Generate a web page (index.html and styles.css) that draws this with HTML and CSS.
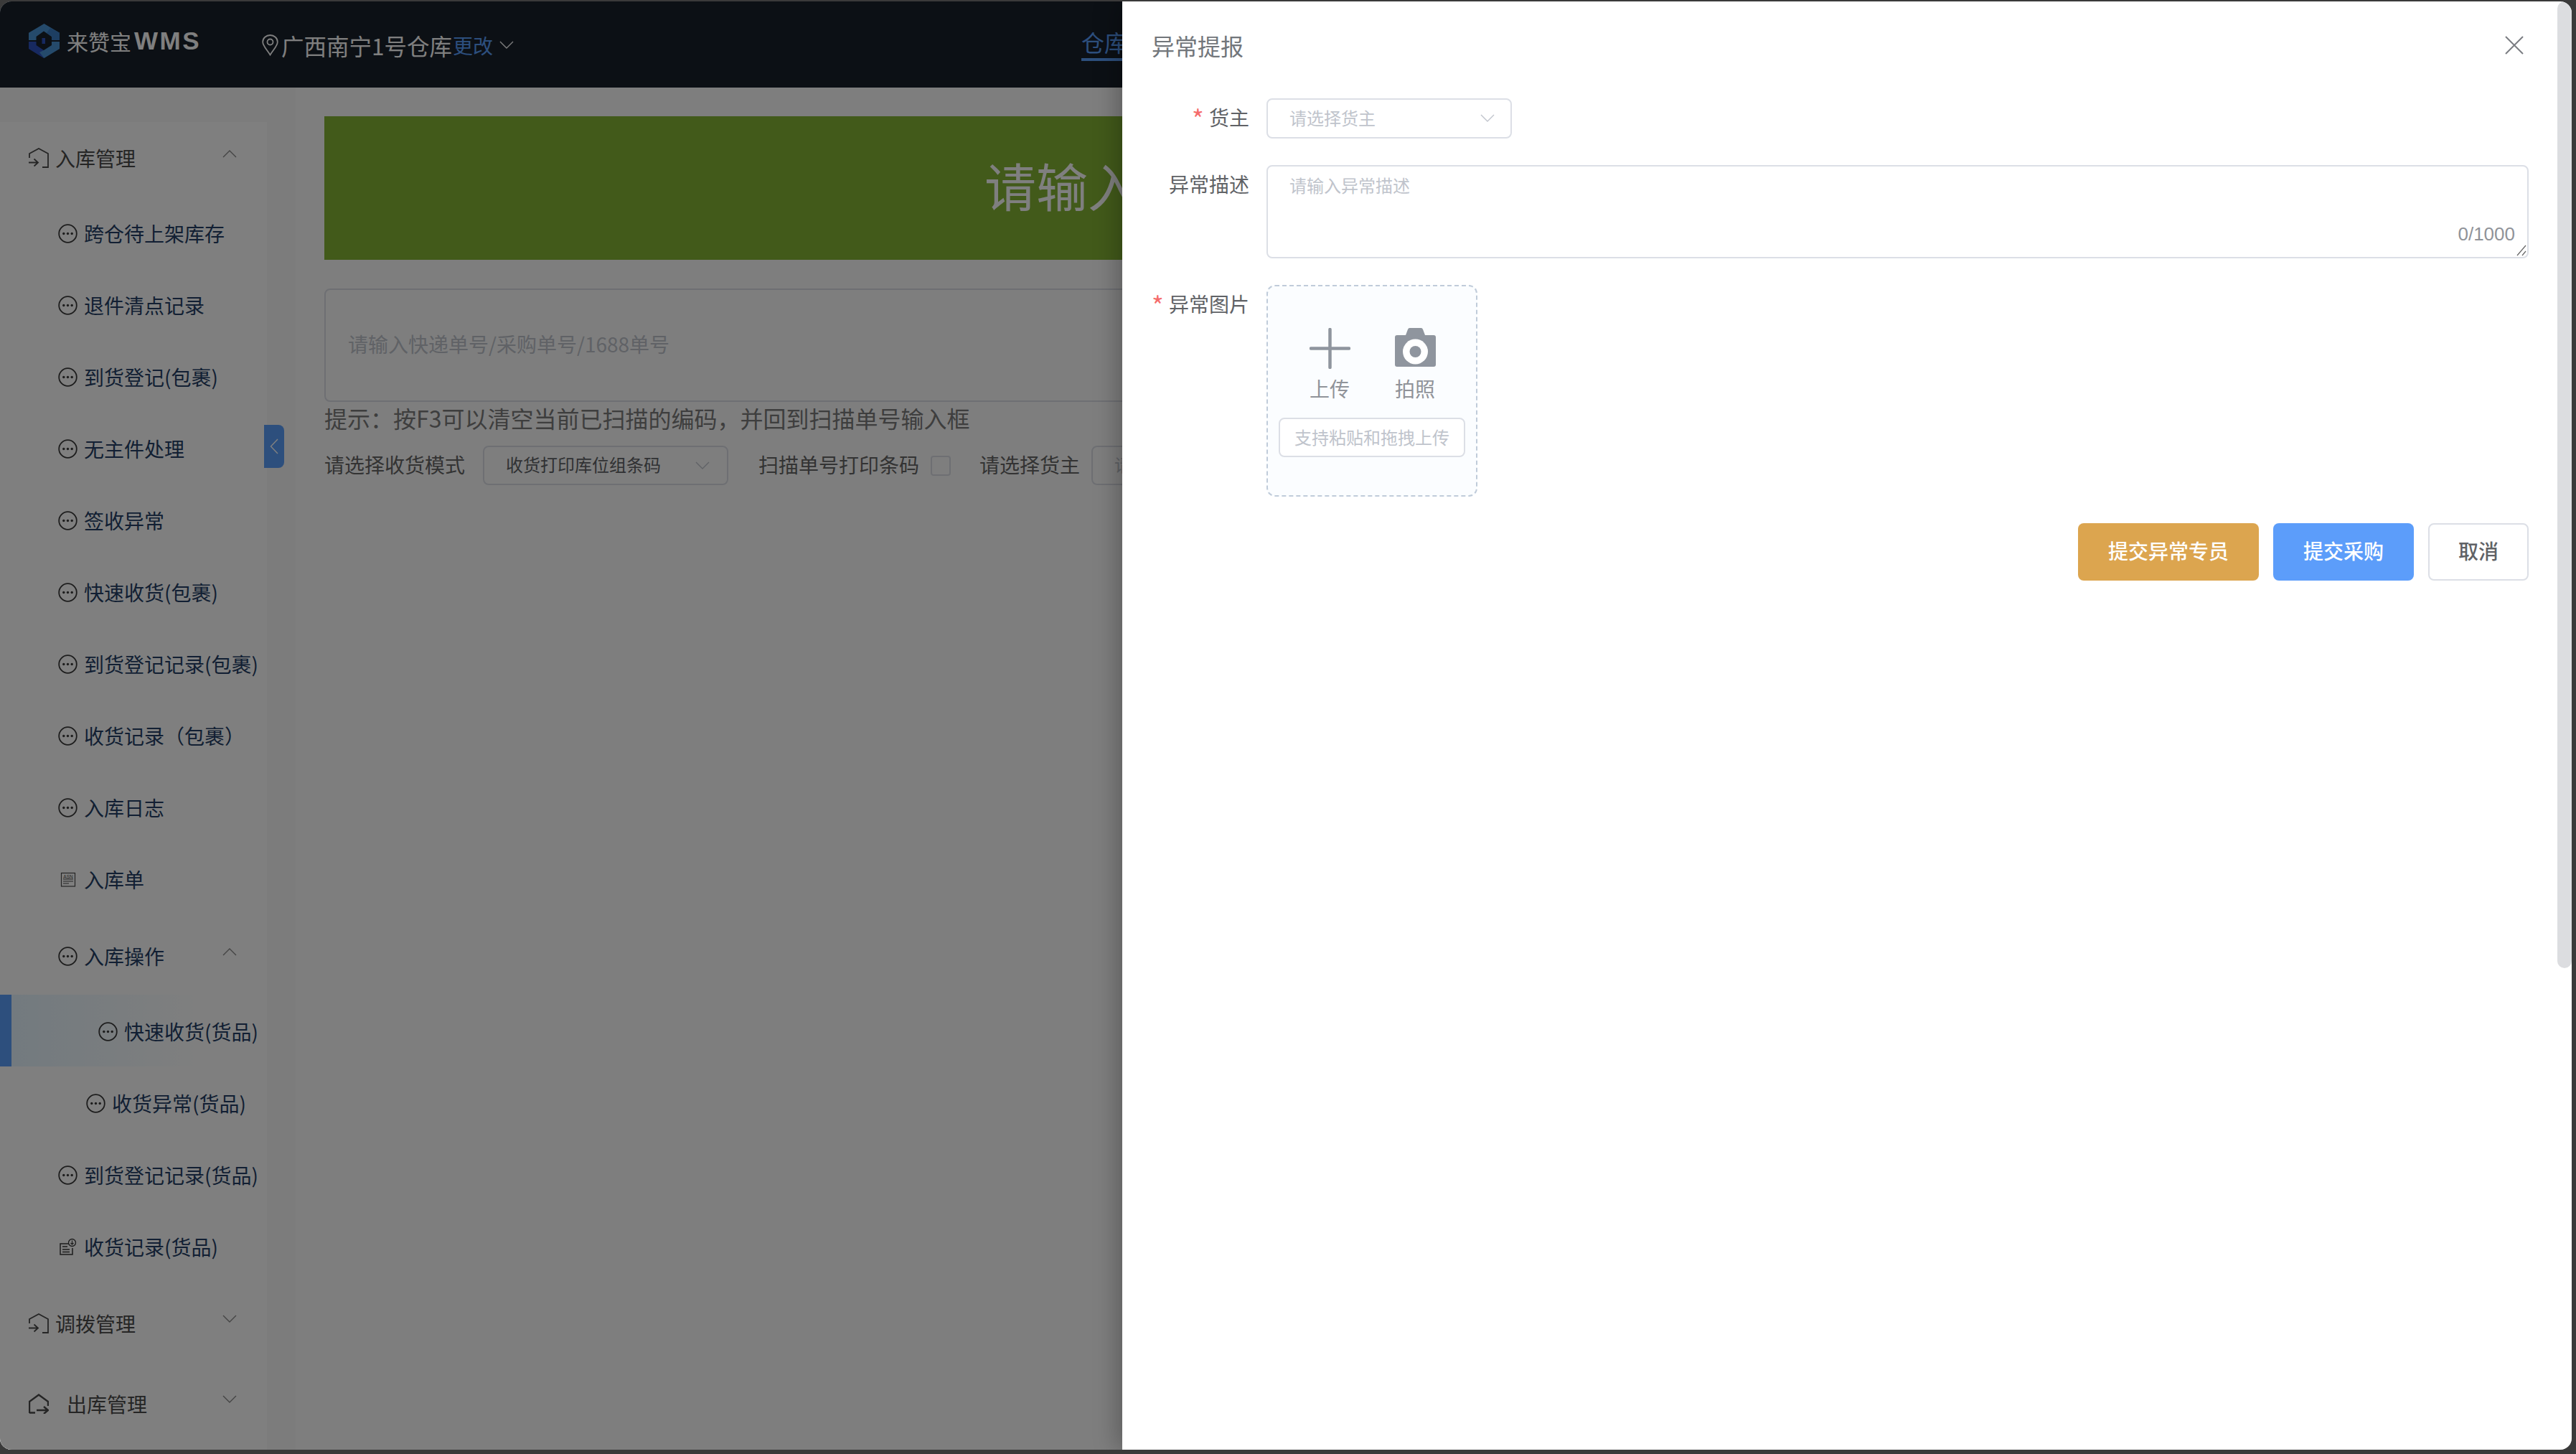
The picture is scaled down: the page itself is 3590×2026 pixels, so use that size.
FILE: index.html
```html
<!DOCTYPE html>
<html lang="zh-CN">
<head>
    <meta charset="utf-8">
    <title>来赞宝WMS</title>
    <link rel="stylesheet" href="styles.css">
</head>

<body>
    <svg class="defs" width="0" height="0">
        <symbol id="i-dots" viewBox="0 0 27 27">
            <circle cx="13.5" cy="13.5" r="12.3" fill="none" stroke="currentColor" stroke-width="1.8"/>
            <circle cx="7.8" cy="13.5" r="1.7" fill="currentColor"/>
            <circle cx="13.5" cy="13.5" r="1.7" fill="currentColor"/>
            <circle cx="19.2" cy="13.5" r="1.7" fill="currentColor"/>
        </symbol>
        <symbol id="i-in" viewBox="0 0 28 28">
            <path d="M1 14V8L14 1l13 7v19h-8M0 20.500h13M7.500 15.500l5.500 5-5.500 5" fill="none" stroke="currentColor" stroke-width="1.800"/>
        </symbol>
        <symbol id="i-out" viewBox="0 0 28 28">
            <path d="M1 27V11L14 1.500 27 11v6M1 26.500h8M11 23h16M21 18l6 5-6 5" fill="none" stroke="currentColor" stroke-width="2.400"/>
        </symbol>
        <symbol id="i-down" viewBox="0 0 20 12">
            <path d="M1 1l9 9 9-9" fill="none" stroke="currentColor" stroke-width="1.4"/>
        </symbol>
        <symbol id="i-up" viewBox="0 0 20 12">
            <path d="M1 11l9-9 9 9" fill="none" stroke="currentColor" stroke-width="1.4"/>
        </symbol>
    </svg>

    <div class="window">
        <header class="topbar">
            <div class="logo">
                <svg width="44" height="48" viewBox="0 0 44 48">
                    <path d="M21.500 0L43 12.700V23H32v-5L21 10.500 10.500 18v5H0V12.700z" fill="#4a94d6"/>
                    <path d="M30 6l13 6.700V23H32v-5l-7-5z" fill="#3a7cc4"/>
                    <path d="M0 25h10.500v5L21 37l4 3-4 8L0 35z" fill="#2f52c0"/>
                    <path d="M43 25H32v5L21 37l-6 3 6.500 8L43 35z" fill="#4a94d6"/>
                    <path d="M18.500 20h4.500v8h-4.500z" fill="#2f52c0"/>
                </svg>
                <span class="logo-name">来赞宝</span><b class="logo-wms">WMS</b>
            </div>
            <div class="house">
                <svg width="23" height="30" viewBox="0 0 23 30">
                    <path d="M11.5 28.5C6 20 1.2 15.5 1.2 10.5a10.3 9.5 0 0 1 20.6 0c0 5-4.800 9.500-10.300 18z" fill="none" stroke="#fff" stroke-width="1.8"/>
                    <circle cx="11.500" cy="10.500" r="4" fill="none" stroke="#fff" stroke-width="1.800"/>
                </svg>
                <span class="house-name">广西南宁1号仓库</span>
                <a class="house-change">更改</a>
                <svg class="house-arrow" width="22" height="12"><use href="#i-down"/></svg>
            </div>
            <nav class="topnav">
                <a class="topnav-on">仓库</a>
            </nav>
        </header>

        <div class="body">
            <aside class="side">
                <ul class="menu">
                    <li class="item top first"><svg class="ic"><use href="#i-in"/></svg>入库管理<svg class="arrow"><use href="#i-up"/></svg></li>
                    <li class="item sub gap-s"><svg class="dot"><use href="#i-dots"/></svg>跨仓待上架库存</li>
                    <li class="item sub"><svg class="dot"><use href="#i-dots"/></svg>退件清点记录</li>
                    <li class="item sub"><svg class="dot"><use href="#i-dots"/></svg>到货登记(包裹)</li>
                    <li class="item sub"><svg class="dot"><use href="#i-dots"/></svg>无主件处理</li>
                    <li class="item sub"><svg class="dot"><use href="#i-dots"/></svg>签收异常</li>
                    <li class="item sub"><svg class="dot"><use href="#i-dots"/></svg>快速收货(包裹)</li>
                    <li class="item sub"><svg class="dot"><use href="#i-dots"/></svg>到货登记记录(包裹)</li>
                    <li class="item sub"><svg class="dot"><use href="#i-dots"/></svg>收货记录（包裹）</li>
                    <li class="item sub"><svg class="dot"><use href="#i-dots"/></svg>入库日志</li>
                    <li class="item sub">
                        <svg class="dot" viewBox="0 0 27 27">
                            <rect x="4.500" y="4.500" width="19" height="18.500" fill="none" stroke="#4a4a4a" stroke-width="1.200"/>
                            <path d="M7 13h14M7 16h14M7 19h8" stroke="#4a4a4a" stroke-width="1.200"/>
                            <text x="14" y="11.500" class="asn">ASN</text>
                        </svg>入库单
                    </li>
                    <li class="item sub gap"><svg class="dot"><use href="#i-dots"/></svg>入库操作<svg class="arrow"><use href="#i-up"/></svg></li>
                    <li class="item active"><svg class="dot"><use href="#i-dots"/></svg>快速收货(货品)</li>
                    <li class="item third"><svg class="dot"><use href="#i-dots"/></svg>收货异常(货品)</li>
                    <li class="item sub"><svg class="dot"><use href="#i-dots"/></svg>到货登记记录(货品)</li>
                    <li class="item sub">
                        <svg class="dot" viewBox="0 0 27 27">
                            <path d="M20 9H3v15h17v-9M6 13h7M6 17h10M6 20.500h10" fill="none" stroke="currentColor" stroke-width="1.500"/>
                            <circle cx="19.500" cy="7.500" r="5" fill="#fff" stroke="currentColor" stroke-width="1.300"/>
                            <path d="M19.500 4.500v5M17.500 8l2 2 2-2" fill="none" stroke="currentColor" stroke-width="1.100"/>
                        </svg>收货记录(货品)
                    </li>
                    <li class="item top gap"><svg class="ic"><use href="#i-in"/></svg>调拨管理<svg class="arrow"><use href="#i-down"/></svg></li>
                    <li class="item top out"><svg class="ic"><use href="#i-out"/></svg>出库管理<svg class="arrow"><use href="#i-down"/></svg></li>
                </ul>
                <div class="fold">
                    <svg width="12" height="22" viewBox="0 0 12 22"><path d="M11 1L1.500 11l9.500 10" fill="none" stroke="#fff" stroke-width="1.500"/></svg>
                </div>
            </aside>

            <main class="page">
                <div class="banner">请输入</div>
                <div class="scan-input">请输入快递单号/采购单号/1688单号</div>
                <p class="tip">提示：按F3可以清空当前已扫描的编码，并回到扫描单号输入框</p>
                <div class="filters">
                    <span class="filter-label">请选择收货模式</span>
                    <div class="filter-select">收货打印库位组条码<svg width="20" height="12"><use href="#i-down"/></svg></div>
                    <span class="filter-label print">扫描单号打印条码</span>
                    <span class="check"></span>
                    <span class="filter-label owner">请选择货主</span>
                    <div class="filter-select last">请选择货主</div>
                </div>
            </main>
        </div>

        <div class="mask"></div>

        <section class="drawer">
            <div class="drawer-head">
                <h2>异常提报</h2>
                <svg class="close" width="26" height="26" viewBox="0 0 26 26"><path d="M1 1l24 24M25 1L1 25" stroke="#7b7d82" stroke-width="2"/></svg>
            </div>

            <div class="row row-owner">
                <label class="req">货主</label>
                <div class="select">请选择货主<svg width="20" height="12"><use href="#i-down"/></svg></div>
            </div>

            <div class="row row-desc">
                <label>异常描述</label>
                <div class="area">
                    请输入异常描述
                    <span class="count">0/1000</span>
                    <svg class="grip" width="14" height="16" viewBox="0 0 14 16"><path d="M1 15L13 1M8 15l5-6" stroke="#666" stroke-width="1.200"/></svg>
                </div>
            </div>

            <div class="row row-pic">
                <label class="req">异常图片</label>
                <div class="upload">
                    <div class="upload-btns">
                        <div class="upload-btn">
                            <svg width="57" height="57" viewBox="0 0 57 57"><path d="M28.500 2v53M2 28.500h53" stroke="#8f959e" stroke-width="4.500" stroke-linecap="round"/></svg>
                            <span>上传</span>
                        </div>
                        <div class="upload-btn">
                            <svg width="57" height="57" viewBox="0 0 57 57">
                                <path d="M3 11h12l3-8a3 3 0 0 1 3-2h15a3 3 0 0 1 3 2l3 8h12a3 3 0 0 1 3 3v38a3 3 0 0 1-3 3H3a3 3 0 0 1-3-3V14a3 3 0 0 1 3-3z" transform="translate(0 -1)" fill="#8f959e"/>
                                <circle cx="28.500" cy="33" r="17.500" fill="#fff"/>
                                <circle cx="28.500" cy="33" r="8" fill="#8f959e"/>
                            </svg>
                            <span>拍照</span>
                        </div>
                    </div>
                    <div class="paste">支持粘贴和拖拽上传</div>
                </div>
            </div>

            <div class="actions">
                <button class="btn btn-orange">提交异常专员</button>
                <button class="btn btn-blue">提交采购</button>
                <button class="btn btn-plain">取消</button>
            </div>

            <div class="scrollbar"></div>
        </section>
    </div>
</body>
</html>
```

FILE: styles.css
```css
* {
    box-sizing: border-box;
}

html,
body {
    margin: 0;
    height: 100%;
    background-color: #3a3a3a;
    overflow: hidden;
}

body {
    padding-top: 2px;
    font-family: "Noto Sans CJK SC", "Liberation Sans", sans-serif;
    font-size: 28px;
}

.defs {
    position: absolute;
}

.window {
    position: relative;
    width: 3584px;
    height: 2018px;
    border-radius: 16px;
    overflow: hidden;
    background-color: #fdfdfd;
}

/* top bar */
.topbar {
    display: flex;
    align-items: center;
    height: 120px;
    background-color: #18202a;
    color: #fff;
}

.logo {
    display: flex;
    align-items: center;
    width: 365px;
    padding-left: 40px;
    margin-top: -10px;
}

.logo-name {
    margin-left: 9px;
    font-size: 30px;
    line-height: 48px;
}

.logo-wms {
    margin-left: 4px;
    font-family: "Liberation Sans", sans-serif;
    font-size: 35px;
    letter-spacing: 2.500px;
}

.house {
    display: flex;
    align-items: center;
    margin-top: 2px;
    width: 1142px;
}

.house-name {
    margin-left: 4px;
    font-size: 31.500px;
}

.house-change {
    margin-left: 1px;
    color: #5a9efa;
}

.house-arrow {
    margin-left: 8px;
    color: #fff;
}

.topnav a {
    display: block;
    width: 128px;
    margin-top: -2px;
    padding-bottom: 2px;
    font-size: 32px;
    line-height: 42px;
    color: #5a9efa;
    border-bottom: 4px solid #5a9efa;
}

/* left menu */
.body {
    display: flex;
    height: 1898px;
}

.side {
    position: relative;
    flex: none;
    width: 412px;
    padding: 40px 40px 0 0;
    background-color: #f8f8f8;
}

.menu {
    margin: 0;
    padding: 0;
    height: 100%;
    list-style: none;
    background-color: #fff;
}

.item {
    display: flex;
    align-items: center;
    height: 100px;
    color: #243e66;
    white-space: nowrap;
}

.first {
    margin-top: 8px;
}

.gap-s {
    margin-top: 5px;
}

.gap {
    margin-top: 7px;
}

.top {
    padding-left: 40px;
    color: #4a4a4a;
}

.out {
    margin-top: 12px;
}

.sub {
    padding-left: 81px;
}

.third {
    margin-top: 1px;
    padding-left: 120px;
}

.active {
    margin-top: 4px;
    padding: 2px 0 0 121px;
    background: linear-gradient(90deg, #e6f5ff, #fff 75%);
    border-left: 16px solid #5a9efa;
}

.ic {
    width: 28px;
    height: 28px;
    margin-right: 9px;
    color: #4a4a4a;
}

.out .ic {
    margin-right: 25px;
}

.dot {
    flex: none;
    width: 27px;
    height: 27px;
    margin-right: 9px;
    color: #3a3a3a;
}

.asn {
    font-family: "Liberation Sans", sans-serif;
    font-size: 6.500px;
    text-anchor: middle;
    fill: #4a4a4a;
}

.arrow {
    position: absolute;
    left: 310px;
    width: 20px;
    height: 12px;
    margin-top: -12px;
    color: #888;
}

.fold {
    position: absolute;
    left: 368px;
    top: 470px;
    display: flex;
    align-items: center;
    justify-content: center;
    width: 28px;
    height: 60px;
    border-radius: 0 8px 8px 0;
    background-color: #5a9efa;
}

/* page behind the drawer */
.page {
    flex: 1;
    padding: 40px 0 0 40px;
    overflow: hidden;
}

.banner {
    height: 200px;
    padding-left: 920px;
    font-size: 72px;
    line-height: 189px;
    color: #fff;
    background-color: #84b534;
}

.scan-input {
    height: 158px;
    margin-top: 40px;
    padding-left: 31px;
    line-height: 150px;
    color: #c0c4cc;
    border: 2px solid #dcdfe6;
    border-radius: 8px;
}

.tip {
    margin: 2px 0 0;
    font-size: 32px;
    line-height: 40px;
    color: #7d7d7d;
}

.filters {
    display: flex;
    align-items: center;
    margin-top: 19px;
    color: #666;
}

.filter-label {
    padding-bottom: 4px;
}

.filter-select {
    display: flex;
    align-items: center;
    justify-content: space-between;
    width: 342px;
    height: 55px;
    margin-left: 25px;
    padding: 0 24px 4px 30px;
    font-size: 24px;
    color: #606266;
    border: 2px solid #dcdfe6;
    border-radius: 8px;
}

.filter-select svg {
    margin-top: 4px;
    color: #c0c4cc;
}

.print {
    margin-left: 42px;
}

.check {
    width: 28px;
    height: 28px;
    margin-left: 16px;
    border: 2px solid #dcdfe6;
    border-radius: 4px;
}

.owner {
    margin-left: 40px;
}

.filter-select.last {
    margin-left: 16px;
    flex: none;
    color: #c0c4cc;
}

.mask {
    position: absolute;
    inset: 0;
    background-color: rgba(0, 0, 0, 0.5);
}

/* drawer */
.drawer {
    position: absolute;
    top: 0;
    right: 0;
    bottom: 0;
    width: 2020px;
    padding: 0 60px 0 41px;
    background-color: #fff;
    box-shadow: -8px 0 30px rgba(0, 0, 0, 0.25);
}

.drawer-head {
    display: flex;
    align-items: center;
    justify-content: space-between;
    height: 128px;
    padding: 0 7px 6px 0;
}

.drawer-head h2 {
    margin: 0;
    font-size: 32px;
    font-weight: 400;
    color: #72767b;
}

.row {
    display: flex;
}

.row label {
    flex: none;
    width: 160px;
    padding-right: 24px;
    font-size: 28px;
    line-height: 42px;
    text-align: right;
    white-space: nowrap;
    color: #606266;
}

.req::before {
    content: "*";
    display: inline-block;
    width: 24px;
    font-size: 36px;
    line-height: 0;
    text-align: left;
    vertical-align: -5px;
    color: #f56c6c;
}

.row-owner {
    margin-top: 7px;
}

.row-owner label {
    line-height: 52px;
}

.select {
    display: flex;
    align-items: center;
    justify-content: space-between;
    width: 342px;
    height: 56px;
    padding: 0 22px 4px 30px;
    font-size: 24px;
    color: #c0c4cc;
    border: 2px solid #dcdfe6;
    border-radius: 8px;
}

.select svg {
    margin-top: 4px;
    color: #c0c4cc;
}

.row-desc {
    margin-top: 37px;
}

.row-desc label {
    margin-top: 5px;
}

.area {
    position: relative;
    flex: 1;
    height: 130px;
    padding: 8px 30px;
    font-size: 24px;
    line-height: 36px;
    color: #c0c4cc;
    border: 2px solid #dcdfe6;
    border-radius: 8px;
}

.count {
    position: absolute;
    right: 17px;
    bottom: 16px;
    font-family: "Liberation Sans", sans-serif;
    font-size: 26px;
    line-height: 32px;
    color: #909399;
}

.grip {
    position: absolute;
    right: 1px;
    bottom: 1px;
}

.row-pic {
    margin-top: 37px;
}

.row-pic label {
    margin-top: 5px;
}

.upload {
    display: flex;
    flex-direction: column;
    align-items: center;
    width: 294px;
    height: 295px;
    padding-top: 58px;
    background-color: #fbfdff;
    border: 2px dashed #c0ccda;
    border-radius: 12px;
}

.upload-btns {
    display: flex;
    gap: 62px;
    margin-left: 1px;
}

.upload-btn {
    display: flex;
    flex-direction: column;
    align-items: center;
    font-size: 28px;
    line-height: 40px;
    color: #909399;
}

.upload-btn svg {
    margin-bottom: 7px;
}

.paste {
    width: 260px;
    height: 55px;
    margin-top: 21px;
    font-size: 24px;
    line-height: 49px;
    text-align: center;
    white-space: nowrap;
    color: #c0c4cc;
    background-color: #fff;
    border: 2px solid #dcdfe6;
    border-radius: 8px;
}

.actions {
    display: flex;
    justify-content: flex-end;
    gap: 20px;
    margin-top: 37px;
}

.btn {
    height: 80px;
    padding: 0 0 4px;
    font-family: inherit;
    font-size: 28px;
    font-weight: 500;
    color: #fff;
    border: 0;
    border-radius: 8px;
}

.btn-orange {
    width: 252px;
    background-color: #dca54f;
}

.btn-blue {
    width: 196px;
    background-color: #5c9dfa;
}

.btn-plain {
    width: 140px;
    color: #606266;
    background-color: #fff;
    border: 2px solid #dcdfe6;
}

.scrollbar {
    position: absolute;
    top: 0;
    right: 0;
    width: 20px;
    height: 1347px;
    border-radius: 10px;
    background-color: #dcdde0;
}
```
